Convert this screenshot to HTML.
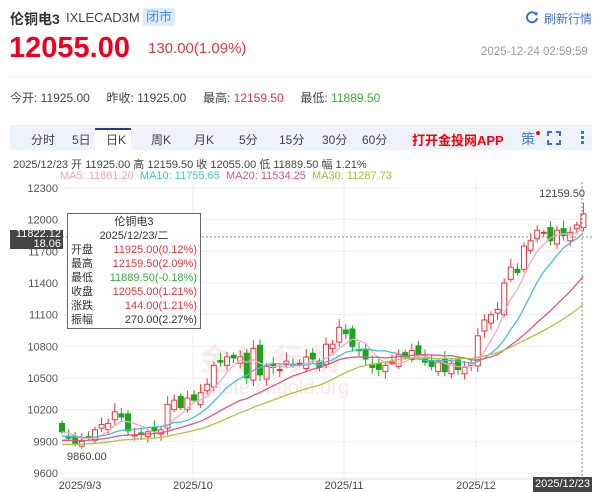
<!DOCTYPE html>
<html><head><meta charset="utf-8"><style>
*{margin:0;padding:0;box-sizing:border-box}
body{width:600px;height:492px;overflow:hidden;background:#fff;font-family:"Liberation Sans","Noto Sans CJK SC",sans-serif;position:relative;color:#333}
.a{position:absolute;white-space:nowrap}
</style></head><body>
<div class="a" style="left:10px;top:9px;font-size:14px;font-weight:bold;color:#333">伦铜电3</div>
<div class="a" style="left:66px;top:10px;font-size:13px;color:#444">IXLECAD3M</div>
<div class="a" style="left:143px;top:8px;width:32px;height:18px;background:#dcebfb;color:#4d8fe0;font-size:13px;line-height:18px;text-align:center">闭市</div>
<div class="a" style="left:9px;top:32px;font-size:29px;font-weight:bold;color:#f00020">12055.00</div>
<div class="a" style="left:148px;top:40px;font-size:15px;color:#e8333a">130.00(1.09%)</div>
<svg class="a" style="left:525px;top:10px" width="14" height="14" viewBox="0 0 14 14"><path d="M11.5 5A5 5 0 1 0 12 8" fill="none" stroke="#3b6fd4" stroke-width="2"/><path d="M9 4.5L12.5 5.5 12.5 1.5Z" fill="#3b6fd4"/></svg>
<div class="a" style="left:544px;top:10px;font-size:12px;color:#4a6fd6">刷新行情</div>
<div class="a" style="left:481px;top:46px;font-size:11.5px;color:#999">2025-12-24 02:59:59</div>
<div class="a" style="left:10px;top:76px;width:582px;height:1px;background:#eee"></div>
<div class="a" style="left:10px;top:89px;font-size:12px;color:#444">今开: 11925.00&nbsp;&nbsp;&nbsp;&nbsp; 昨收: 11925.00&nbsp;&nbsp;&nbsp;&nbsp; 最高: <span style="color:#e8333a">12159.50</span>&nbsp;&nbsp;&nbsp;&nbsp; 最低: <span style="color:#3aad3a">11889.50</span></div>
<div class="a" style="left:10px;top:125px;width:582px;height:25px;background:#eef2fa"></div>
<div class="a" style="left:95px;top:128px;width:36px;height:22px;background:#fff;border-top:2px solid #233d8c"></div>
<div class="a" style="top:131px;left:0;font-size:12px;color:#444">
<span class="a" style="left:31px">分时</span><span class="a" style="left:72px">5日</span><span class="a" style="left:106px">日K</span><span class="a" style="left:151px">周K</span><span class="a" style="left:194px">月K</span><span class="a" style="left:239px">5分</span><span class="a" style="left:279px">15分</span><span class="a" style="left:322px">30分</span><span class="a" style="left:362px">60分</span></div>
<div class="a" style="left:412px;top:130px;font-size:13px;font-weight:bold;color:#f00">打开金投网APP</div>
<div class="a" style="left:521px;top:129px;font-size:14px;color:#4a7fd0">策</div>
<div class="a" style="left:536px;top:131px;width:4px;height:4px;border-radius:2px;background:#f00"></div>
<svg class="a" style="left:547px;top:131px" width="14" height="14"><path d="M1 5V1H5M9 1H13V5M13 9V13H9M5 13H1V9" fill="none" stroke="#3b6fd4" stroke-width="2"/></svg>
<div class="a" style="left:581px;top:131px;width:3px;height:3px;background:#3b6fd4;box-shadow:0 5px 0 #3b6fd4,0 10px 0 #3b6fd4"></div>
<div class="a" style="left:13px;top:156px;font-size:11px;color:#444">2025/12/23 开 11925.00 高 12159.50 收 12055.00 低 11889.50 幅 1.21%</div>
<div class="a" style="left:60px;top:170px;font-size:11px"><span style="color:#f7a0b8">MA5: 11861.20</span>&nbsp; <span style="color:#3fc0e0">MA10: 11755.65</span>&nbsp; <span style="color:#e8508a">MA20: 11534.25</span>&nbsp; <span style="color:#a0c03a">MA30: 11287.73</span></div>
<svg class="a" id="ch" style="left:0;top:0" width="600" height="492"></svg>
<div class="a" style="left:67px;top:213px;width:134px;height:116px;background:rgba(255,255,255,.92);border:1.5px solid #666;font-size:11px;line-height:14px;padding:1px 3px">
<div style="text-align:center">伦铜电3</div><div style="text-align:center">2025/12/23/二</div>
<div style="display:flex;justify-content:space-between"><span>开盘</span><span style="color:#e8333a">11925.00(0.12%)</span></div>
<div style="display:flex;justify-content:space-between"><span>最高</span><span style="color:#e8333a">12159.50(2.09%)</span></div>
<div style="display:flex;justify-content:space-between"><span>最低</span><span style="color:#3aad3a">11889.50(-0.18%)</span></div>
<div style="display:flex;justify-content:space-between"><span>收盘</span><span style="color:#e8333a">12055.00(1.21%)</span></div>
<div style="display:flex;justify-content:space-between"><span>涨跌</span><span style="color:#e8333a">144.00(1.21%)</span></div>
<div style="display:flex;justify-content:space-between"><span>振幅</span><span>270.00(2.27%)</span></div>
</div>
<div class="a" style="left:10px;top:230px;width:53px;height:19px;background:#444;color:#fff;font-size:11px;line-height:9.5px;text-align:right;padding-right:2px">11822.12<br>18.06</div>
<div class="a" style="left:533px;top:477px;width:59px;height:15px;background:#444;color:#fff;font-size:11px;line-height:15px;text-align:center">2025/12/23</div>
<script>
var c=[9990,9930,9880,9900,9940,10010,10060,10070,10180,10130,10000,9960,9970,9990,10000,10010,10250,10290,10220,10310,
10290,10360,10440,10620,10650,10700,10690,10700,10500,10780,10530,10610,10600,10580,10660,10620,10640,10700,10680,10600,10820,10820,10980,
10920,10800,10760,10680,10600,10580,10620,10650,10720,10700,10760,10720,10650,10610,10650,10560,10640,10580,10600,10640,
10900,11050,11100,11150,11400,11550,11500,11750,11800,11900,11880,11800,11900,11850,11880,11950,12055];
function Y(p){return 188+(12300-p)*0.10556}
function X(i){return 62+i*6.6}
var s='';
for(var k=0;k<10;k++){var y=Y(12300-k*300);s+='<line x1="62" x2="584" y1="'+y+'" y2="'+y+'" stroke="#eee"/>';
s+='<text x="58" y="'+(y+4)+'" font-size="11" fill="#555" text-anchor="end" font-family="Liberation Sans">'+(12300-k*300)+'</text>';}
[193,344,476].forEach(function(x){s+='<line x1="'+x+'" x2="'+x+'" y1="182" y2="479" stroke="#eee"/>'});
s+='<line x1="62" x2="592" y1="479" y2="479" stroke="#ddd"/>';
s+='<text x="200" y="394" font-size="20" fill="#f6e8e6" font-family="Liberation Sans">quote.cngold.org</text>';
s+='<text x="200" y="370" font-size="30" fill="#f8ecea" font-weight="bold" font-family="Noto Sans CJK SC">金 投 行 情</text>';
var noise=[30,-40,20,-25,45,-30,15,-50,35,-20];
for(var i=0;i<80;i++){var o=i==79?11925:(i?c[i-1]:10040)+noise[i%10];var cl=c[i];var up=cl>=o;
var h=Math.max(o,cl)+25+(i*37%60),l=Math.min(o,cl)-20-(i*53%50);if(i==79){h=12159.5;l=11889.5}
var col=up?'#f0353a':'#1aa51a',x=X(i);
s+='<line x1="'+x+'" x2="'+x+'" y1="'+Y(h)+'" y2="'+Y(l)+'" stroke="'+col+'"/>';
var t=Y(Math.max(o,cl)),b=Y(Math.min(o,cl));if(b-t<1)b=t+1;
s+='<rect x="'+(x-2.5)+'" y="'+t+'" width="5" height="'+(b-t)+'" fill="'+(up?'#fff':col)+'" stroke="'+col+'"/>';}
function ma(n,col,off){var p='';for(var i=0;i<80;i++){var sum=0;for(var j=0;j<n;j++){sum+=c[Math.max(0,i-j)]}var v=sum/n;p+=(i?'L':'M')+X(i)+' '+Y(v-(i<n?off*(n-i)/n:0))}
s+='<path d="'+p+'" fill="none" stroke="'+col+'" stroke-width="1.3"/>';}
ma(5,'#f7a8c0',0);ma(10,'#3fc0e0',40);ma(20,'#e8508a',80);ma(30,'#a8c83a',120);
s+='<line x1="62" x2="592" y1="237" y2="237" stroke="#888" stroke-dasharray="2,2"/>';
s+='<line x1="582" x2="582" y1="182" y2="479" stroke="#888" stroke-dasharray="2,2"/>';
s+='<text x="585" y="197" font-size="11" fill="#444" text-anchor="end" font-family="Liberation Sans">12159.50</text>';
s+='<text x="67" y="460" font-size="11" fill="#444" font-family="Liberation Sans">9860.00</text>';
[[80,'2025/9/3'],[193,'2025/10'],[344,'2025/11'],[476,'2025/12']].forEach(function(a){s+='<text x="'+a[0]+'" y="489" font-size="11" fill="#444" text-anchor="middle" font-family="Liberation Sans">'+a[1]+'</text>'});
document.getElementById('ch').innerHTML=s;
</script>
</body></html>
